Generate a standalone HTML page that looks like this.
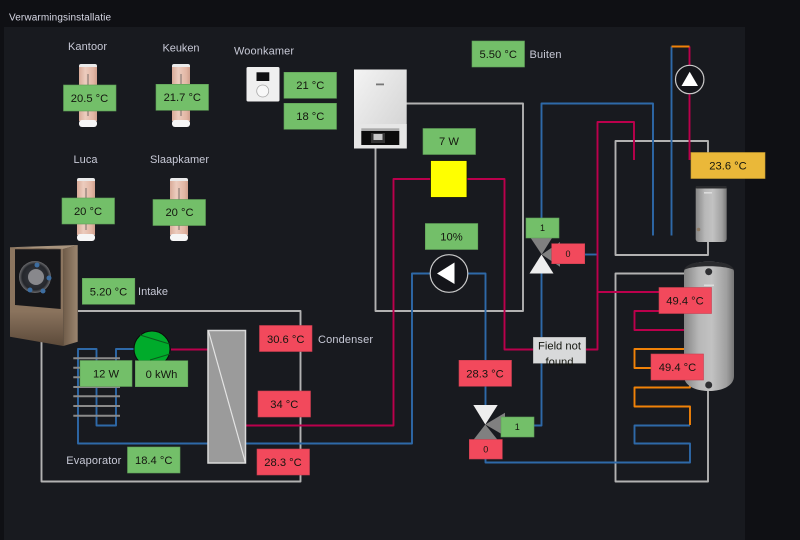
<!DOCTYPE html>
<html>
<head>
<meta charset="utf-8">
<style>
html,body{margin:0;padding:0;width:800px;height:540px;overflow:hidden;background:#0f1014;}
svg{display:block;position:absolute;left:0;top:0;}
text{font-family:"Liberation Sans",sans-serif;}
.l{font-size:11px;fill:#c7c9d6;}
.v{font-size:11.2px;fill:#14160f;text-anchor:middle;}
.s{font-size:9px;fill:#14160f;text-anchor:middle;}
.g{fill:#73bf69;stroke:#5f9e57;stroke-width:.6;}
.r{fill:#f2495c;stroke:#c93f50;stroke-width:.6;}
.line{fill:none;stroke-width:1.9;stroke-linejoin:round;}
.gr{stroke:#b2b2b2;}
.bl{stroke:#2e69a8;}
.cr{stroke:#bb004c;}
.or{stroke:#f08208;}
</style>
</head>
<body>
<svg width="800" height="540" viewBox="0 0 800 540" xmlns="http://www.w3.org/2000/svg">
<defs>
<linearGradient id="rad" x1="0" x2="1" y1="0" y2="0"><stop offset="0" stop-color="#d8aa98"/><stop offset=".35" stop-color="#ecccbe"/><stop offset=".8" stop-color="#e2b6a4"/><stop offset="1" stop-color="#cfa08e"/></linearGradient>
<linearGradient id="tank" x1="0" x2="1" y1="0" y2="0"><stop offset="0" stop-color="#858585"/><stop offset=".3" stop-color="#b8b8b8"/><stop offset=".55" stop-color="#c2c2c2"/><stop offset=".85" stop-color="#a0a0a0"/><stop offset="1" stop-color="#767676"/></linearGradient>
<linearGradient id="hp" x1="0" x2="0" y1="0" y2="1"><stop offset="0" stop-color="#8c7660"/><stop offset=".65" stop-color="#8a735d"/><stop offset="1" stop-color="#5c4a3a"/></linearGradient>
<linearGradient id="hps" x1="0" x2="1" y1="0" y2="0"><stop offset="0" stop-color="#6e5b48"/><stop offset="1" stop-color="#9c8670"/></linearGradient>
<linearGradient id="boil" x1="0" x2="1" y1="0" y2="1"><stop offset="0" stop-color="#f4f4f4"/><stop offset="1" stop-color="#cfcfcf"/></linearGradient>
<radialGradient id="fan"><stop offset="0" stop-color="#3a3d44"/><stop offset=".8" stop-color="#25272c"/><stop offset="1" stop-color="#6d6d70"/></radialGradient>
<symbol id="radi" viewBox="0 0 18 63" width="18" height="63">
<rect x="0" y="0" width="18" height="5" rx="2" fill="#eaeaea"/>
<rect x="0" y="3" width="18" height="54" fill="url(#rad)"/>
<rect x="8.4" y="10" width="1.200" height="42" fill="#8c7c76"/>
<rect x="0" y="56" width="18" height="7" rx="3" fill="#f6f6f6"/>
</symbol>
</defs>

<rect x="0" y="0" width="800" height="540" fill="#0f1014"/>
<rect x="4" y="27" width="741" height="513" fill="#181a1f"/>
<text x="9" y="20.500" font-size="10" fill="#d8d9e6" font-weight="400" textLength="102">Verwarmingsinstallatie</text>

<!-- gray frames -->
<path class="line gr" d="M78 311H300.500V481.500H41.500V330"/>
<path class="line gr" d="M375.500 148V311H523V103.500H406"/>
<path class="line gr" d="M708 178V141H615.500V255H708V240"/>
<path class="line gr" d="M690 273.500H615.500V481.500H708V390"/>

<!-- blue -->
<path class="line bl" d="M245 443.500H412V273.500H430"/>
<path class="line bl" d="M468 273.500H485.500V405"/>
<path class="line bl" d="M541.500 220V103.500H653V235.500"/>
<path class="line bl" d="M671.500 235.500V46.500"/>
<path class="line bl" d="M585 254.500H597"/>
<path class="line bl" d="M534 425.500H541.500V270"/>
<path class="line bl" d="M690 425.500H634.500V443.500H690V462.500H485.500V458"/>
<path class="line bl" d="M208 443.500H78V349H96.500V425.500H116V349H135"/>

<!-- crimson -->
<path class="line cr" d="M689.500 46.500V160"/>
<path class="line cr" d="M634 160V122H597.500V349.500H585"/>
<path class="line cr" d="M597.500 292H660"/>
<path class="line cr" d="M245 425.500H393.500V179H431"/>
<path class="line cr" d="M467 179H504.500V349.500H534"/>
<path class="line cr" d="M660 311H634.500V330H689.500"/>
<path class="line cr" d="M171 349.500H208"/>

<!-- orange -->
<path class="line or" d="M671.500 46.500H689.500"/>
<path class="line or" d="M689.500 330H690V349H634.500V368H652"/>
<path class="line or" d="M684 387.500H690V380M690 387.500H634.500V406.500H690V425"/>

<!-- pumps -->
<circle cx="449" cy="273.500" r="18.800" fill="#14151a" stroke="#c9c9c9" stroke-width="1.200"/>
<polygon points="437,273.500 454.500,262.500 454.500,284" fill="#fff"/>
<circle cx="689.700" cy="79.500" r="14.200" fill="#14151a" stroke="#c9c9c9" stroke-width="1.200"/>
<polygon points="689.700,71.700 681.500,86 698,86" fill="#fff"/>

<!-- yellow -->
<rect x="430.500" y="160.500" width="36.500" height="37" fill="#ffff00" stroke="#111" stroke-width=".8"/>

<!-- tanks -->
<rect x="695.700" y="186" width="31" height="56" rx="3" fill="url(#tank)"/>
<rect x="695.700" y="186" width="31" height="2.500" rx="1" fill="#2a2b2e"/>
<rect x="704" y="192" width="8" height="1.600" fill="#dcdcdc"/>
<circle cx="698.500" cy="229.500" r="1.800" fill="#8c7a66"/>
<path d="M684 272C684 265 695 261.700 709 261.700S734 265 734 272V376C734 386 722 391 709 391S684 386 684 376Z" fill="url(#tank)"/>
<path d="M684 270C686 264 695 261.700 709 261.700S732 264 734 270C726 265 692 265 684 270Z" fill="#2a2b2e"/>
<circle cx="708.700" cy="271.700" r="3.500" fill="#2e2f32"/>
<circle cx="708.700" cy="385" r="3.500" fill="#2e2f32"/>
<rect x="704" y="284.500" width="10" height="1.600" fill="#dcdcdc"/>

<!-- radiators -->
<use href="#radi" x="79" y="64"/>
<use href="#radi" x="172" y="64"/>
<use href="#radi" x="77" y="178"/>
<use href="#radi" x="170" y="178"/>

<!-- thermostat -->
<rect x="246.500" y="67" width="33" height="34.500" rx="1.500" fill="#efefef"/>
<rect x="256.500" y="72.300" width="12.800" height="8.700" fill="#101012"/>
<circle cx="262.700" cy="91" r="6" fill="#f8f8f8" stroke="#a8a8a8" stroke-width=".8"/>

<!-- boiler -->
<rect x="354" y="69.500" width="52.700" height="79" fill="url(#boil)"/>
<rect x="354" y="124" width="52.700" height="24.500" fill="#e6e6e6"/>
<rect x="361.300" y="128.300" width="38" height="3" fill="#aaa"/>
<rect x="361.300" y="131" width="38" height="14" fill="#0c0c0c"/>
<rect x="371" y="133" width="14" height="10" fill="#333"/>
<rect x="373.500" y="134" width="9" height="6" fill="#c8c8c8"/>
<rect x="376" y="83.500" width="8" height="1.800" fill="#777"/>

<!-- heat pump -->
<polygon points="63,249 77.700,245 77.700,341.700 63.300,346" fill="url(#hps)"/>
<polygon points="10,247.300 77.700,245 63,249" fill="#a8947e"/>
<polygon points="10,247.300 63,249 63.300,346 10,336.700" fill="url(#hp)"/>
<polygon points="15,249.300 60.700,249.300 60.700,309 15,305" fill="#17171a"/>
<circle cx="35" cy="277" r="16" fill="url(#fan)"/>
<circle cx="37" cy="265" r="2.500" fill="#3d6da0"/>
<circle cx="49" cy="278" r="2.500" fill="#3d6da0"/>
<circle cx="30" cy="290" r="2.500" fill="#3d6da0"/>
<circle cx="43" cy="291" r="2.500" fill="#3d6da0"/>
<circle cx="36" cy="277" r="8" fill="#88888c"/>

<!-- evaporator fins -->
<g stroke="#8a8a8a" stroke-width="2">
<path d="M73.300 358.300H120M73.300 367.700H120M73.300 377.300H120M73.300 387H120M73.300 396.300H120M73.300 406H120M73.300 415.700H120"/>
</g>

<!-- compressor -->
<circle cx="152" cy="349" r="18" fill="#00ab2b" stroke="#0a0a0a" stroke-width="1"/>
<path d="M140 335L169.500 344M150 360L170 354" stroke="#0b5a1c" stroke-width="1" fill="none"/>

<!-- condenser -->
<rect x="208" y="330.500" width="37.500" height="132.500" fill="#9b9b9b" stroke="#d9d9d9" stroke-width="1.500"/>
<path d="M208.500 331L245.500 463" stroke="#e4e4e4" stroke-width="1.200"/>

<!-- valves -->
<polygon points="530.700,238 552,238 541.700,254.500" fill="#808080"/>
<polygon points="541.700,254.500 560,242 560,266.700" fill="#808080"/>
<polygon points="541.500,254.500 529.500,273.500 553.500,273.500" fill="#eeeeee"/>
<polygon points="473.300,405 497.700,405 485.300,424.500" fill="#eeeeee"/>
<polygon points="485.300,424.500 505,412.700 505,436" fill="#808080"/>
<polygon points="485.300,424.500 473.300,440 497.700,440" fill="#808080"/>

<!-- labels -->
<text class="l" x="68" y="50" textLength="39">Kantoor</text>
<text class="l" x="162.500" y="51.500" textLength="37">Keuken</text>
<text class="l" x="234" y="54.500" textLength="60">Woonkamer</text>
<text class="l" x="73.500" y="163" textLength="24">Luca</text>
<text class="l" x="150" y="163" textLength="59">Slaapkamer</text>
<text class="l" x="529.500" y="58" textLength="32">Buiten</text>
<text class="l" x="138" y="295" textLength="30">Intake</text>
<text class="l" x="318" y="343" textLength="55">Condenser</text>
<text class="l" x="66.300" y="464" textLength="55">Evaporator</text>

<!-- stickers -->
<rect class="g" x="63.500" y="85" width="52.500" height="26"/><text class="v" x="89.500" y="102">20.5 °C</text>
<rect class="g" x="156" y="84.300" width="52.500" height="26"/><text class="v" x="182.300" y="101">21.7 °C</text>
<rect class="g" x="62" y="198" width="52.500" height="26"/><text class="v" x="88" y="215">20 °C</text>
<rect class="g" x="153" y="199.500" width="52.500" height="26"/><text class="v" x="179.500" y="216">20 °C</text>
<rect class="g" x="284" y="72.300" width="52.500" height="26"/><text class="v" x="310.300" y="89">21 °C</text>
<rect class="g" x="284" y="103.300" width="52.500" height="26"/><text class="v" x="310.300" y="120">18 °C</text>
<rect class="g" x="472" y="41" width="52.500" height="26"/><text class="v" x="498.200" y="58">5.50 °C</text>
<rect class="g" x="423" y="128.500" width="52.500" height="26"/><text class="v" x="449" y="145">7 W</text>
<rect class="g" x="425.300" y="223.500" width="52.500" height="26"/><text class="v" x="451.500" y="240.500">10%</text>
<rect class="g" x="526" y="218" width="33" height="20"/><text class="s" x="542.500" y="231">1</text>
<rect class="r" x="551.700" y="243.700" width="33" height="20"/><text class="s" x="568" y="257">0</text>
<rect x="691" y="152.500" width="74" height="26" fill="#eab839" stroke="#c99e30" stroke-width=".6"/><text class="v" x="728" y="169.500">23.6 °C</text>
<rect class="g" x="82.300" y="278.300" width="52.500" height="26"/><text class="v" x="108.500" y="295.500">5.20 °C</text>
<rect class="r" x="259.500" y="325.500" width="52.500" height="26"/><text class="v" x="285.700" y="343">30.6 °C</text>
<rect class="r" x="258" y="391" width="52.500" height="26"/><text class="v" x="284.300" y="408">34 °C</text>
<rect class="r" x="257" y="449" width="52.500" height="26"/><text class="v" x="283" y="466">28.3 °C</text>
<rect class="g" x="127.500" y="447" width="52.500" height="26"/><text class="v" x="153.700" y="464">18.4 °C</text>
<rect class="g" x="80" y="360.500" width="52" height="26"/><text class="v" x="106" y="377.500">12 W</text>
<rect class="g" x="135.300" y="360.700" width="52.500" height="26"/><text class="v" x="161.500" y="378">0 kWh</text>
<rect class="r" x="659" y="287.500" width="52.500" height="26"/><text class="v" x="685" y="304.500">49.4 °C</text>
<rect class="r" x="651" y="354" width="52.500" height="26"/><text class="v" x="677.500" y="371">49.4 °C</text>
<rect class="r" x="459" y="360.300" width="52.500" height="26"/><text class="v" x="485" y="377.500">28.3 °C</text>
<rect x="533.300" y="337.300" width="52.500" height="26" fill="#d8d9da" stroke="#aaa" stroke-width=".5"/>
<text class="v" x="559.500" y="349.500">Field not</text><text class="v" x="559.500" y="365.500">found</text>
<rect class="g" x="501" y="417" width="33" height="20"/><text class="s" x="517.300" y="430">1</text>
<rect class="r" x="469.300" y="439.500" width="33" height="19.500"/><text class="s" x="485.700" y="452.500">0</text>
</svg>
</body>
</html>
